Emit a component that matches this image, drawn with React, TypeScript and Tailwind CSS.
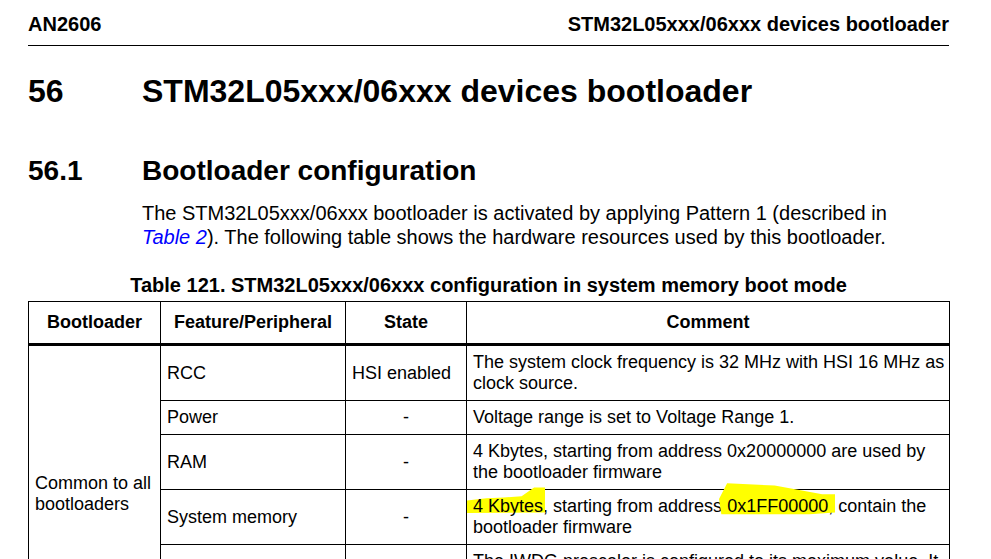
import React from "react";

function Hl({
  children,
  points,
  cls,
}: {
  children: React.ReactNode;
  points: string;
  cls: string;
}) {
  return (
    <span className="relative">
      <svg
        className={cls}
        viewBox="0 0 100 100"
        preserveAspectRatio="none"
        aria-hidden="true"
      >
        <polygon points={points} fill="#ffff00" />
      </svg>
      <span className="relative">{children}</span>
    </span>
  );
}

export default function App() {
  const td = "border border-black px-[6px] py-[6px] align-middle whitespace-nowrap";
  const th = "border border-black border-b-[3px] px-[6px] py-[10px] font-bold text-center align-middle";
  return (
    <div className="w-[991px] h-[559px] overflow-hidden bg-white text-black font-['Liberation_Sans',Arial,sans-serif]">
      <div className="ml-[28px] w-[921px] flex justify-between border-b border-black pt-[13px] pb-[9px] text-[20px] leading-[23px] font-bold">
        <span>AN2606</span>
        <span>STM32L05xxx/06xxx devices bootloader</span>
      </div>

      <div className="ml-[28px] mt-[27px] flex text-[32px] leading-[37px] font-bold">
        <span className="w-[114px]">56</span>
        <span>STM32L05xxx/06xxx devices bootloader</span>
      </div>

      <div className="ml-[28px] mt-[45px] flex text-[28px] leading-[32px] font-bold">
        <span className="w-[114px]">56.1</span>
        <span>Bootloader configuration</span>
      </div>

      <p className="ml-[142px] mt-[15px] text-[20px] leading-[23.5px]">
        The STM32L05xxx/06xxx bootloader is activated by applying Pattern 1 (described in
        <br />
        <span className="italic text-[#0000ff]">Table 2</span>). The following table shows the
        hardware resources used by this bootloader.
      </p>

      <div className="ml-[28px] w-[921px] mt-[25px] text-center text-[20px] leading-[23px] font-bold">
        Table 121. STM32L05xxx/06xxx configuration in system memory boot mode
      </div>

      <table className="ml-[28px] mt-[4px] w-[921px] table-fixed border-collapse text-[18px] leading-[21px]">
        <colgroup>
          <col className="w-[132px]" />
          <col className="w-[185px]" />
          <col className="w-[121px]" />
          <col className="w-[483px]" />
        </colgroup>
        <thead>
          <tr>
            <th className={th}>Bootloader</th>
            <th className={th}>Feature/Peripheral</th>
            <th className={th}>State</th>
            <th className={th}>Comment</th>
          </tr>
        </thead>
        <tbody>
          <tr>
            <td className={td} rowSpan={5}>
              Common to all
              <br />
              bootloaders
            </td>
            <td className={td}>RCC</td>
            <td className={td}>HSI enabled</td>
            <td className={td}>
              The system clock frequency is 32 MHz with HSI 16 MHz as
              <br />
              clock source.
            </td>
          </tr>
          <tr>
            <td className={td}>Power</td>
            <td className={td + " text-center"}>-</td>
            <td className={td}>Voltage range is set to Voltage Range 1.</td>
          </tr>
          <tr>
            <td className={td}>RAM</td>
            <td className={td + " text-center"}>-</td>
            <td className={td}>
              4 Kbytes, starting from address 0x20000000 are used by
              <br />
              the bootloader firmware
            </td>
          </tr>
          <tr>
            <td className={td}>System memory</td>
            <td className={td + " text-center"}>-</td>
            <td className={td}>
              <Hl
                cls="absolute left-[-6px] top-[-9px] w-[78px] h-[26px] pointer-events-none"
                points="0,52 25,43 47,40 70,36 86,2 100,2 100,98 0,100"
              >
                4 Kbytes
              </Hl>
              , starting from address{" "}
              <Hl
                cls="absolute left-[-8px] top-[-13px] w-[116px] h-[32px] pointer-events-none"
                points="0,50 7,1 48,8 89,35 100,35 100,92 78,98 2,98"
              >
                0x1FF00000
              </Hl>
              , contain the
              <br />
              bootloader firmware
            </td>
          </tr>
          <tr>
            <td className={td}>IWDG</td>
            <td className={td + " text-center"}>-</td>
            <td className={td}>
              The IWDG prescaler is configured to its maximum value. It
              <br />
              is periodically refreshed to prevent watchdog reset (in
              <br />
              case the hardware IWDG option was previously enabled by
              <br />
              the user).
            </td>
          </tr>
        </tbody>
      </table>
    </div>
  );
}
